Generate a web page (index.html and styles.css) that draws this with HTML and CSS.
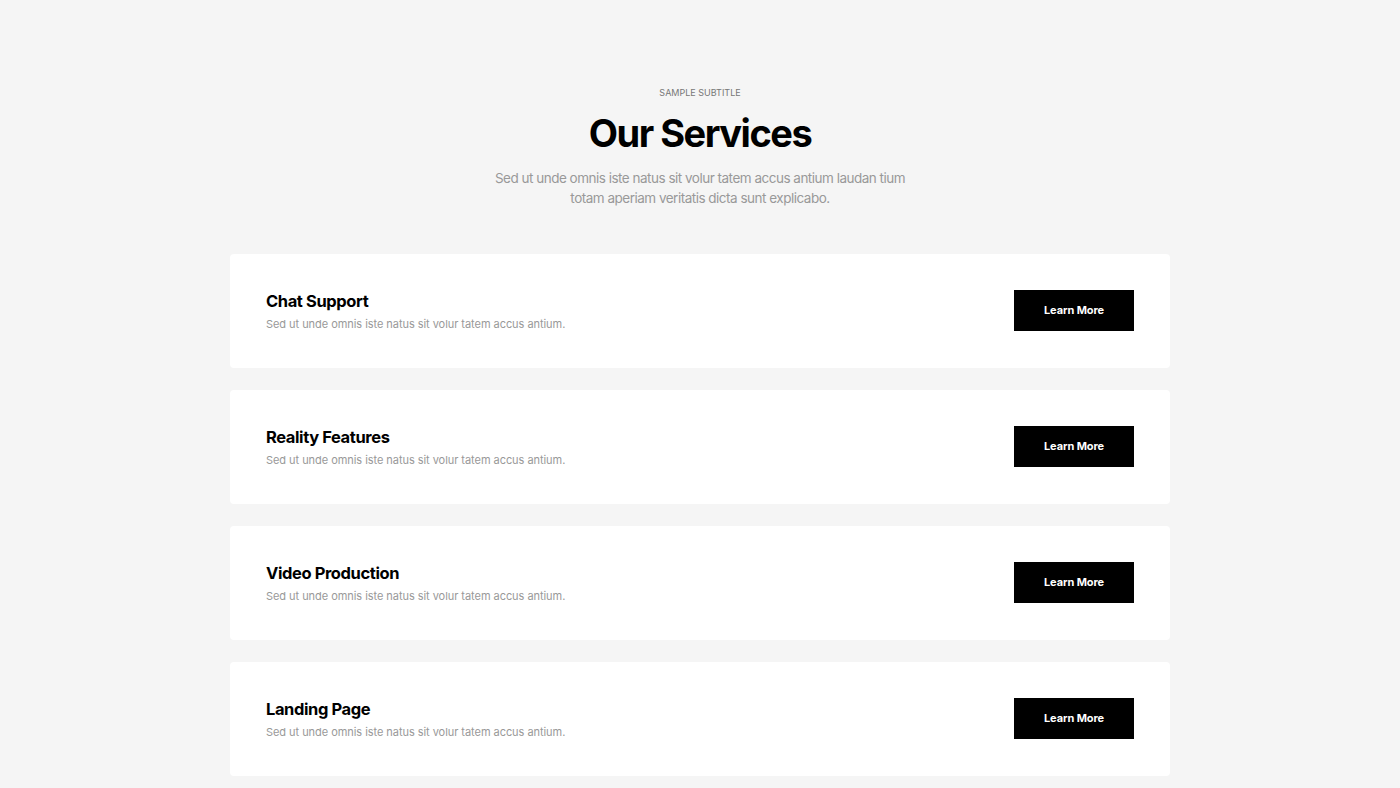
FILE: index.html
```html
<!DOCTYPE html>
<html lang="en">
<head>
  <meta charset="UTF-8" />
  <meta name="viewport" content="width=device-width, initial-scale=1" />
  <title>Our Services</title>
  <link rel="stylesheet" href="styles.css">
</head>
<body>
  <section class="services">
    <div class="services-head">
      <p class="subtitle">Sample Subtitle</p>
      <h1>Our Services</h1>
      <p class="lead">Sed ut unde omnis iste natus sit volur tatem accus antium laudan tium totam aperiam veritatis dicta sunt explicabo.</p>
    </div>

    <div class="service-list">
      <div class="service-card">
        <div class="service-text">
          <h3>Chat Support</h3>
          <p>Sed ut unde omnis iste natus sit volur tatem accus antium.</p>
        </div>
        <a href="#" class="btn">Learn More</a>
      </div>

      <div class="service-card">
        <div class="service-text">
          <h3>Reality Features</h3>
          <p>Sed ut unde omnis iste natus sit volur tatem accus antium.</p>
        </div>
        <a href="#" class="btn">Learn More</a>
      </div>

      <div class="service-card">
        <div class="service-text">
          <h3>Video Production</h3>
          <p>Sed ut unde omnis iste natus sit volur tatem accus antium.</p>
        </div>
        <a href="#" class="btn">Learn More</a>
      </div>

      <div class="service-card">
        <div class="service-text">
          <h3>Landing Page</h3>
          <p>Sed ut unde omnis iste natus sit volur tatem accus antium.</p>
        </div>
        <a href="#" class="btn">Learn More</a>
      </div>
    </div>
  </section>
</body>
</html>
```

FILE: styles.css
```css
body {
  margin: 0;
  background: #f5f5f5;
  font-family: Inter, "Noto Sans", sans-serif;
  color: #000;
}
.services {
  width: 940px;
  margin: 0 auto;
  padding-top: 87px;
}
.services-head {
  text-align: center;
  margin-bottom: 46px;
}
.subtitle {
  margin: 0;
  font-size: 9px;
  line-height: 12px;
  text-transform: uppercase;
  color: #777;
}
h1 {
  margin: 10px 0 11px;
  font-size: 38px;
  line-height: 48px;
  font-weight: 700;
  letter-spacing: -1.5px;
}
.lead {
  width: 430px;
  margin: 0 auto;
  font-size: 13.5px;
  line-height: 20px;
  color: #999;
  letter-spacing: -0.5px;
}
.service-list {
  display: flex;
  flex-direction: column;
  gap: 22px;
}
.service-card {
  background: white;
  border-radius: 4px;
  height: 114px;
  padding: 0 36px;
  box-sizing: border-box;
  display: flex;
  align-items: center;
  justify-content: space-between;
}
.service-text h3 {
  margin: 0 0 4px;
  font-size: 16.5px;
  line-height: 22px;
  font-weight: 700;
  letter-spacing: -0.4px;
}
.service-text p {
  margin: 0;
  font-size: 11px;
  line-height: 16px;
  color: #999;
  letter-spacing: -0.05px;
}
.btn {
  display: flex;
  align-items: center;
  justify-content: center;
  width: 120px;
  height: 41px;
  margin-top: -2px;
  background: #000;
  color: white;
  font-size: 11px;
  font-weight: 700;
  text-decoration: none;
  letter-spacing: -0.1px;
}
```
